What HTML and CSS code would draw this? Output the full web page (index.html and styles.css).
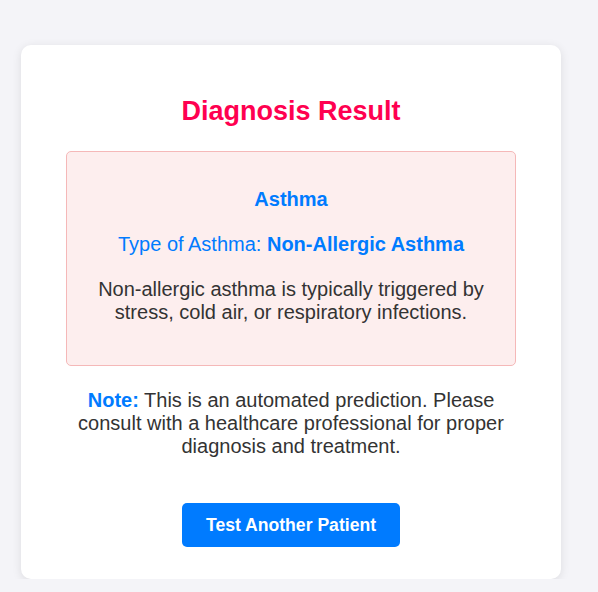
FILE: index.html
```html
<!DOCTYPE html>
<html lang="en">
<head>
<meta charset="utf-8">
<title>Diagnosis Result</title>
<link rel="stylesheet" href="styles.css">
</head>
<body>
<div class="card">
  <h2 class="title">Diagnosis Result</h2>
  <div class="result">
    <h3 class="disease">Asthma</h3>
    <p class="type">Type of Asthma: <strong>Non-Allergic Asthma</strong></p>
    <p class="desc">Non-allergic asthma is typically triggered by stress, cold air, or respiratory infections.</p>
  </div>
  <p class="note"><strong>Note:</strong> This is an automated prediction. Please consult with a healthcare professional for proper diagnosis and treatment.</p>
  <div class="actions">
    <a class="btn" href="#">Test Another Patient</a>
  </div>
</div>
</body>
</html>
```
FILE: styles.css
```css
html, body {
  margin: 0;
  padding: 0;
}
body {
  background: #f4f4f8;
  font-family: "Liberation Sans", Arial, sans-serif;
  padding: 45px 37px 0 21px;
}
.card {
  width: 540px;
  box-sizing: border-box;
  background: #ffffff;
  border-radius: 10px;
  box-shadow: 0 2px 10px rgba(0, 0, 0, 0.1);
  padding: 51px 45px 32px;
  text-align: center;
}
.title {
  margin: 0 0 24px;
  font-size: 27px;
  font-weight: bold;
  color: #ff0050;
}
.result {
  background: #fdeeee;
  border: 1px solid #f5b8b8;
  border-radius: 5px;
  padding: 20px;
}
.disease {
  margin: 16px 0 22px;
  font-size: 20px;
  font-weight: bold;
  color: #007bff;
}
.type {
  margin: 0 0 22px;
  font-size: 20px;
  color: #007bff;
}
.desc {
  margin: 0 0 21px;
  font-size: 20px;
  color: #333333;
}
.note {
  margin: 23px 0 0;
  font-size: 20px;
  color: #333333;
}
.note strong {
  color: #007bff;
}
.actions {
  margin-top: 45px;
}
.btn {
  display: inline-block;
  background: #007bff;
  color: #ffffff;
  text-decoration: none;
  font-weight: bold;
  font-size: 17.6px;
  padding: 11.5px 24px;
  border-radius: 5px;
}
```
